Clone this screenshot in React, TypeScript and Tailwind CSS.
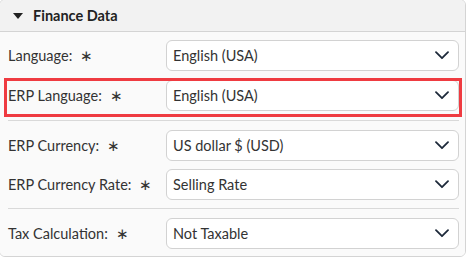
type Field = { label: string; value: string; highlight?: boolean };

function Chevron() {
  return (
    <svg width="14" height="9" viewBox="0 0 14 9" fill="none">
      <path d="M1 1.2 L7 7.2 L13 1.2" stroke="#1e2a3a" strokeWidth="1.8" strokeLinecap="round" strokeLinejoin="round" />
    </svg>
  );
}

function Row({ field }: { field: Field }) {
  return (
    <div className="relative flex items-center h-[31px] pl-[8px]">
      <div className="w-[158px] text-[14.5px] text-[#333]">
        {field.label}
        <span className="ml-[8px]">∗</span>
      </div>
      <div className="flex items-center justify-between w-[293px] h-[31px] bg-white border border-[#d2d2d2] rounded-[6px] pl-[6px] pr-[9px] text-[14.5px] text-[#333]">
        <span>{field.value}</span>
        <Chevron />
      </div>
      {field.highlight && (
        <div className="absolute left-[4px] right-[3px] top-[-2px] bottom-[-6px] border-[3px] border-[#ef3b41] pointer-events-none" />
      )}
    </div>
  );
}

function Divider({ className }: { className: string }) {
  return <div className={`ml-[8px] h-px w-[451px] bg-[#d9d9d9] ${className}`} />;
}

export default function App() {
  return (
    <div className="w-[468px] h-[258px] bg-white overflow-hidden" style={{ fontFamily: 'Lato, "Noto Sans", sans-serif' }}>
      <div className="ml-[-1px] mt-[-1px] w-[467px] border border-[#d4d4d4] rounded-[6px] overflow-hidden">
        {/* header */}
        <div className="flex items-center h-[32px] bg-[#f2f2f2] border-b border-[#d4d4d4] pl-[13px]">
          <svg width="10" height="6" viewBox="0 0 10 6" className="mr-[10px]">
            <path d="M0 0 L10 0 L5 6 Z" fill="#222" />
          </svg>
          <span className="text-[14.5px] font-bold text-[#222]">Finance Data</span>
        </div>

        {/* body */}
        <div className="bg-[#fafafa] pt-[8px] pb-[7px]">
          <div className="flex flex-col gap-[9px]">
            <Row field={{ label: 'Language:', value: 'English (USA)' }} />
            <Row field={{ label: 'ERP Language:', value: 'English (USA)', highlight: true }} />
          </div>
          <Divider className="mt-[9px]" />
          <div className="flex flex-col gap-[8px] mt-[9px]">
            <Row field={{ label: 'ERP Currency:', value: 'US dollar $ (USD)' }} />
            <Row field={{ label: 'ERP Currency Rate:', value: 'Selling Rate' }} />
          </div>
          <Divider className="mt-[8px]" />
          <div className="mt-[9px]">
            <Row field={{ label: 'Tax Calculation:', value: 'Not Taxable' }} />
          </div>
        </div>
      </div>
    </div>
  );
}
